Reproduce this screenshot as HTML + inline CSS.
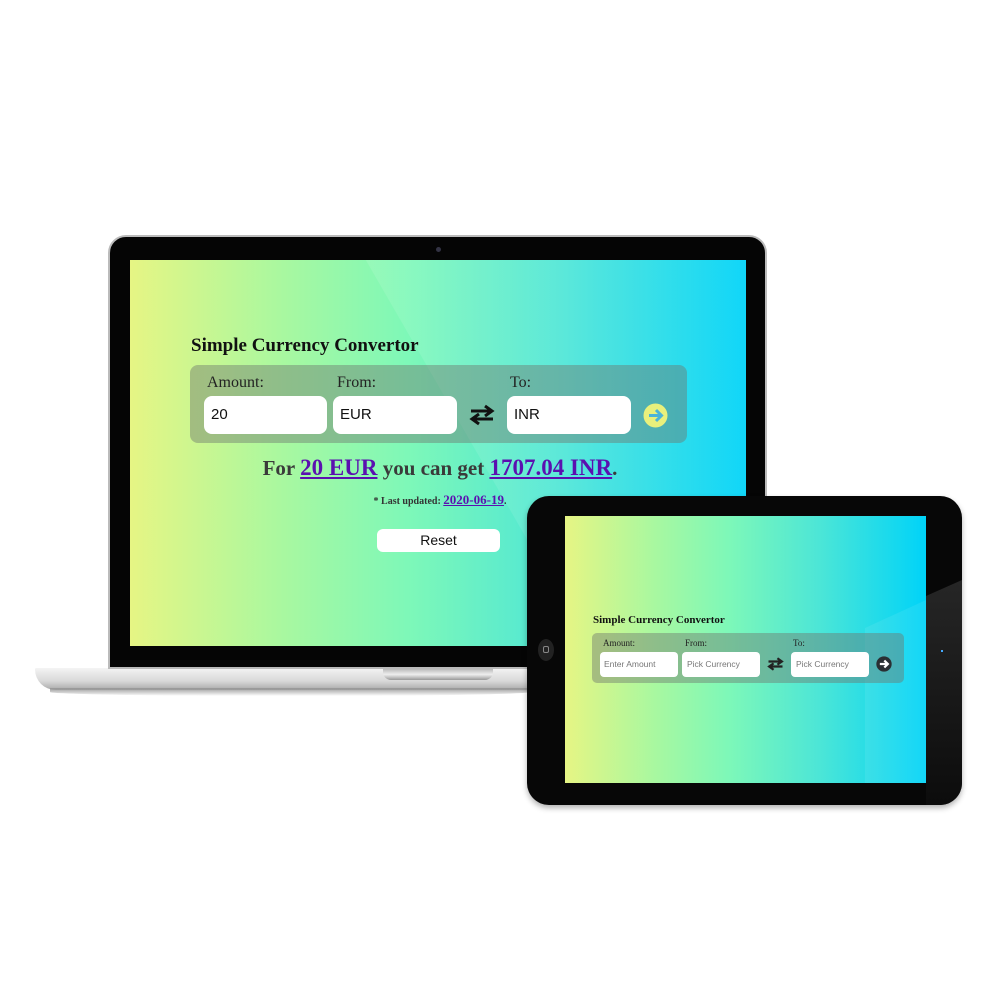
<!DOCTYPE html>
<html><head><style>
*{margin:0;padding:0;box-sizing:border-box}
body{width:1000px;height:1000px;background:#fff;position:relative;overflow:hidden;font-family:"Liberation Serif",serif}
.abs{position:absolute}
.grad{background:linear-gradient(90deg,#e6f584 0%,#a8f8a0 25%,#7ef8b8 45%,#4de6d6 70%,#00d3f8 100%)}
.inp{position:absolute;background:#fff;border-radius:8px;font-family:"Liberation Sans",sans-serif;color:#111}
.lbl{position:absolute;color:#222}
</style></head><body>
<!-- laptop base -->
<div class="abs" style="left:35px;top:668px;width:520px;height:22px;background:linear-gradient(#f4f4f4,#d8d8d8 60%,#a9a9a9);border-radius:2px 2px 30px 30px"></div>
<div class="abs" style="left:50px;top:688px;width:480px;height:8px;background:linear-gradient(#999,rgba(200,200,200,0));border-radius:0 0 50% 50%"></div>
<div class="abs" style="left:383px;top:669px;width:110px;height:11px;background:linear-gradient(#bbb,#eee 50%,#999);border-radius:0 0 8px 8px"></div>
<!-- laptop bezel -->
<div class="abs" style="left:108px;top:235px;width:659px;height:434px;background:#050505;border-radius:18px 18px 0 0;border:2px solid #bbb"></div>
<div class="abs" style="left:436px;top:247px;width:5px;height:5px;border-radius:50%;background:#334"></div>
<div class="abs grad" style="left:130px;top:260px;width:616px;height:386px;overflow:hidden">
 <div class="abs" style="left:230px;top:-10px;width:600px;height:500px;background:linear-gradient(120deg,rgba(255,255,255,0.1),rgba(255,255,255,0.02));transform:skewX(30deg);transform-origin:0 0"></div>
</div>
<div class="abs" style="left:191px;top:335px;font-size:19px;font-weight:bold;color:#111">Simple Currency Convertor</div>
<div class="abs" style="left:190px;top:365px;width:497px;height:78px;background:rgba(110,120,110,0.45);border-radius:8px"></div>
<div class="lbl" style="left:207px;top:374px;font-size:16px">Amount:</div>
<div class="lbl" style="left:337px;top:374px;font-size:16px">From:</div>
<div class="lbl" style="left:510px;top:374px;font-size:16px">To:</div>
<div class="inp" style="left:204px;top:396px;width:123px;height:38px;padding:10px 7px;font-size:15px">20</div>
<div class="inp" style="left:333px;top:396px;width:124px;height:38px;padding:10px 7px;font-size:15px">EUR</div>
<div class="inp" style="left:507px;top:396px;width:124px;height:38px;padding:10px 7px;font-size:15px">INR</div>
<svg class="abs" style="left:469px;top:404px" width="26" height="22" viewBox="0 0 26 22"><path d="M2 7H22M16 2L23 7L16 12" stroke="#111" stroke-width="3" fill="none"/><path d="M24 15H4M10 10L3 15L10 20" stroke="#111" stroke-width="3" fill="none"/></svg>
<svg class="abs" style="left:643px;top:403px" width="25" height="25" viewBox="0 0 25 25"><circle cx="12.5" cy="12.5" r="12" fill="#e8f07c"/><path d="M6 12.5H18M13 7L18.5 12.5L13 18" stroke="#4bb4d8" stroke-width="3" fill="none"/></svg>
<div class="abs" style="left:190px;top:455px;width:500px;text-align:center;font-size:21px;font-weight:bold;color:#3a3a3a">For <u style="color:#5b10b0;font-size:23px">20 EUR</u> you can get <u style="color:#5b10b0;font-size:23px">1707.04 INR</u>.</div>
<div class="abs" style="left:190px;top:492px;width:500px;text-align:center;font-size:10px;font-weight:bold;color:#333">* Last updated: <u style="color:#5b10b0;font-size:13px">2020-06-19</u>.</div>
<div class="abs" style="left:377px;top:529px;width:123px;height:23px;background:#fff;border-radius:6px;text-align:center;font-family:'Liberation Sans',sans-serif;font-size:14px;line-height:23px;color:#111">Reset</div>
<!-- tablet -->
<div class="abs" style="left:527px;top:496px;width:435px;height:309px;background:#070707;border-radius:22px;box-shadow:0 3px 6px rgba(0,0,0,0.3);overflow:hidden">
 <svg class="abs" style="left:0;top:0" width="435" height="309"><defs><linearGradient id="g" x1="0" y1="0" x2="0" y2="1"><stop offset="0" stop-color="#262626"/><stop offset="1" stop-color="#0c0c0c"/></linearGradient></defs><polygon points="399,100 435,84 435,309 399,309" fill="url(#g)"/></svg>
</div>
<div class="abs" style="left:538px;top:639px;width:16px;height:22px;border-radius:50%;background:#222"></div>
<div class="abs" style="left:543px;top:646px;width:6px;height:7px;border:1px solid #888;border-radius:2px"></div>
<div class="abs" style="left:941px;top:650px;width:2px;height:2px;background:#4af"></div>
<div class="abs grad" style="left:565px;top:516px;width:361px;height:267px;overflow:hidden">
 <svg class="abs" style="left:0;top:0" width="361" height="267"><polygon points="300,112 361,84 361,267 300,267" fill="rgba(255,255,255,0.08)"/></svg>
</div>
<div class="abs" style="left:593px;top:614px;font-size:11px;font-weight:bold;color:#111">Simple Currency Convertor</div>
<div class="abs" style="left:592px;top:633px;width:312px;height:50px;background:rgba(110,120,110,0.45);border-radius:5px"></div>
<div class="lbl" style="left:603px;top:638px;font-size:9px">Amount:</div>
<div class="lbl" style="left:685px;top:638px;font-size:9px">From:</div>
<div class="lbl" style="left:793px;top:638px;font-size:9px">To:</div>
<div class="inp" style="left:600px;top:652px;width:78px;height:25px;padding:7px 4px;font-size:8.5px;color:#777;border-radius:4px">Enter Amount</div>
<div class="inp" style="left:682px;top:652px;width:78px;height:25px;padding:7px 5px;font-size:8.5px;color:#777;border-radius:4px">Pick Currency</div>
<div class="inp" style="left:791px;top:652px;width:78px;height:25px;padding:7px 5px;font-size:8.5px;color:#777;border-radius:4px">Pick Currency</div>
<svg class="abs" style="left:767px;top:657px" width="17" height="14" viewBox="0 0 26 22"><path d="M2 7H22M16 2L23 7L16 12" stroke="#222" stroke-width="3.5" fill="none"/><path d="M24 15H4M10 10L3 15L10 20" stroke="#222" stroke-width="3.5" fill="none"/></svg>
<svg class="abs" style="left:876px;top:656px" width="16" height="16" viewBox="0 0 25 25"><circle cx="12.5" cy="12.5" r="12" fill="#2a2f33"/><path d="M6 12.5H18M13 7L18.5 12.5L13 18" stroke="#fff" stroke-width="3.5" fill="none"/></svg>
</body></html>
